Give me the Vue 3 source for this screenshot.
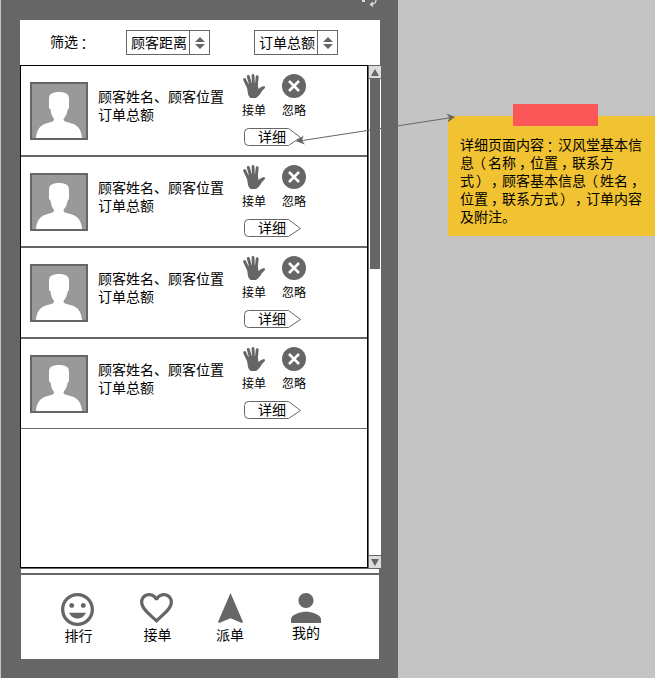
<script setup>
const filters = ['顾客距离', '订单总额']
const rows = [1, 2, 3, 4]
const noteLines = [
  '详细页面内容：汉风堂基本信',
  '息（名称，位置，联系方',
  '式），顾客基本信息（姓名，',
  '位置，联系方式），订单内容',
  '及附注。'
]
const split = (line) => line.split(/([，：（）])/).filter(Boolean)
const marks = { '，': 'comma', '：': 'wide', '（': 'open', '）': 'close' }
const tabs = [
  { name: '排行', cls: 'smile', d: 'M11.99 2C6.47 2 2 6.48 2 12s4.47 10 9.99 10C17.52 22 22 17.52 22 12S17.52 2 11.99 2zM12 20c-4.42 0-8-3.58-8-8s3.58-8 8-8 8 3.58 8 8-3.58 8-8 8zm3.5-9c.83 0 1.5-.67 1.5-1.5S16.33 8 15.5 8 14 8.67 14 9.5s.67 1.5 1.5 1.5zm-7 0c.83 0 1.5-.67 1.5-1.5S9.33 8 8.5 8 7 8.67 7 9.5 7.67 11 8.5 11zm3.5 6.5c2.33 0 4.31-1.46 5.11-3.5H6.89c.8 2.04 2.78 3.5 5.11 3.5z', box: '2 2 20 20', w: 33, ih: 33 },
  { name: '接单', cls: 'heart', d: 'M16.5 3c-1.74 0-3.41.81-4.5 2.09C10.91 3.81 9.24 3 7.5 3 4.42 3 2 5.42 2 8.5c0 3.78 3.4 6.86 8.55 11.54L12 21.35l1.45-1.32C18.6 15.36 22 12.28 22 8.5 22 5.42 19.58 3 16.5 3zm-4.4 15.55l-.1.1-.1-.1C7.14 14.24 4 11.39 4 8.5 4 6.5 5.5 5 7.5 5c1.54 0 3.04.99 3.57 2.36h1.87C13.46 5.99 14.96 5 16.5 5c2 0 3.5 1.5 3.5 3.5 0 2.89-3.14 5.74-7.9 10.05z', box: '2 3 20 18.35', w: 33, ih: 30 },
  { name: '派单', cls: 'send', d: 'M12 2L4.5 20.29l.71.71L12 18l6.79 3 .71-.71z', box: '4.5 2 15 19', w: 25, ih: 30 },
  { name: '我的', cls: 'mine', d: 'M12 12c2.21 0 4-1.79 4-4s-1.79-4-4-4-4 1.79-4 4 1.79 4 4 4zm0 2c-2.67 0-8 1.34-8 4v2h16v-2c0-2.66-5.33-4-8-4z', box: '4 4 16 16', w: 30, ih: 30 }
]
</script>

<template>
  <main class="board">
    <section class="phone">
      <svg class="refresh" width="20" height="7" viewBox="0 0 20 7">
        <path d="M1 0h3v2H1z" fill="#ddd" />
        <path d="M15 0Q15 4 10 4.500M12 2.200L9.500 4.500l2.500 2" fill="none" stroke="#ddd" stroke-width="1.3" />
      </svg>
      <header class="filters">
        <span class="filter-label">筛选<i class="wide">：</i></span>
        <div v-for="f in filters" :key="f" class="select">
          <span class="select-text">{{ f }}</span>
          <span class="stepper">
            <svg width="10" height="12" viewBox="0 0 10 12"><path d="M0 5L5 0l5 5zM0 7h10l-5 5z" /></svg>
          </span>
        </div>
      </header>

      <div class="content">
        <div class="list">
          <article v-for="r in rows" :key="r" class="row">
            <div class="avatar">
              <svg width="54" height="54" viewBox="0 0 54 54">
                <path d="M4 54C4.500 46 8 41.500 14 39.500C19 38 22.500 37.500 22 35Q18.800 31 18.500 25.500L17 24V18L17 15C17 10 20 8 27 8C34 8 37 10 37 15V24L35.800 25.500Q35 31 31.500 35C31 37.500 35 38 40 39.500C46 41.500 49.500 46 50 54Z" fill="#fff" />
              </svg>
            </div>
            <div class="info"><div>顾客姓名、顾客位置</div><div>订单总额</div></div>
            <div class="ops">
              <div class="icons">
                <div class="op">
                  <svg width="24" height="24" viewBox="0 0 24 24">
                    <path d="M6.200 13L2.600 5.500M9 12L6.300 2.500M11.500 12L11 1.500M14.200 12L15.200 2.800" fill="none" stroke="#666" stroke-width="2.900" stroke-linecap="round" />
                    <path d="M4.500 10L8 9.500L10 9L13 9L15.700 9.500L16.500 15Q19 12.500 22 12Q23.800 13 22.500 14.500Q20 16.500 18.500 19.500Q16.500 22.500 14 24H8.500Q6.500 22.500 6 20Z" fill="#666" />
                  </svg>
                  <span>接单</span>
                </div>
                <div class="op">
                  <svg width="24" height="24" viewBox="0 0 24 24">
                    <circle cx="12" cy="12" r="12" fill="#666" />
                    <path d="M7 7l10 10M17 7L7 17" stroke="#fff" stroke-width="2.600" />
                  </svg>
                  <span>忽略</span>
                </div>
              </div>
              <div class="detail">
                <svg width="58" height="19" viewBox="0 0 58 19"><path d="M4.500 .5H44.500L56.500 9.500L44.500 17.500H4.500Q.5 17.500 .5 13.500V4.500Q.5 .5 4.500 .5Z" fill="#fff" stroke="#666" /></svg>
                <span>详细</span>
              </div>
            </div>
          </article>
        </div>
        <div class="scroll">
          <div class="arrow-btn up"><svg width="8" height="7" viewBox="0 0 8 7"><path d="M0 7L4 0l4 7z" /></svg></div>
          <div class="track"><div class="thumb"></div></div>
          <div class="arrow-btn down"><svg width="8" height="7" viewBox="0 0 8 7"><path d="M0 0h8L4 7z" /></svg></div>
        </div>
      </div>

      <div class="strip"></div>
      <nav class="tabs">
        <div v-for="t in tabs" :key="t.name" class="tab" :class="t.cls">
          <svg :width="t.w" :height="t.ih" :viewBox="t.box" preserveAspectRatio="none"><path :d="t.d" /></svg>
          <span>{{ t.name }}</span>
        </div>
      </nav>
    </section>

    <aside class="note">
      <div class="tape"></div>
      <p v-for="line in noteLines" :key="line" class="line"><template v-for="(part, i) in split(line)" :key="i"><i v-if="marks[part]" :class="marks[part]">{{ part }}</i><template v-else>{{ part }}</template></template></p>
    </aside>

    <svg class="link" width="655" height="678" viewBox="0 0 655 678">
      <path d="M299 141L452 117.500" stroke="#666" fill="none" />
      <path d="M296 141.300L303.500 135.500L302 140.500L305 144.500ZM455 117L446.500 113.500L449.500 117.700L447.500 122.500Z" fill="#666" />
    </svg>
  </main>
</template>

<style>
body { margin: 0; background: #c4c4c4; }
</style>

<style scoped>
* { box-sizing: border-box; }
svg { display: block; flex: none; }
.board {
  position: relative; display: flex; align-items: flex-start; width: 655px; height: 678px;
  overflow: hidden; padding-left: 1px; background: #c4c4c4; color: #000;
  font: 14px/18px "Noto Sans CJK SC", sans-serif; white-space: nowrap; text-spacing-trim: space-all;
}
i { font-style: normal; }
.wide, .comma, .open, .close { display: inline-block; width: 14px; height: 16px; }
.wide { font-family: "Noto Sans CJK JP", sans-serif; transform: translate(-1px, 2px); }
.comma { text-indent: 3px; }
.open { text-indent: -2px; }
.close { text-indent: 2px; }
.phone { position: relative; flex: none; width: 397px; height: 678px; padding: 20px 0 0 19px; background: #666; }
.refresh { position: absolute; left: 360px; top: 0; }
.filters { display: flex; align-items: flex-start; width: 360px; height: 45px; padding: 10px 0 0 30px; background: #fff; }
.filter-label { width: 76px; padding-top: 2px; flex: none; }
.select { display: flex; flex: none; width: 84px; height: 25px; margin-right: 44px; border: 1px solid #666; }
.select-text { width: 63px; flex: none; padding: 2px 0 0 4px; border-right: 1px solid #666; }
.stepper { display: flex; align-items: center; justify-content: center; width: 19px; }
.stepper svg, .arrow-btn svg, .tab svg { fill: #666; }
.content { display: flex; height: 503px; }
.list { width: 348px; height: 503px; border: 1px solid #000; background: #fff; }
.row { display: flex; align-items: flex-start; height: 91px; border-bottom: 2px solid #666; padding-left: 9px; }
.row:last-child { height: 90px; border-bottom-width: 1px; }
.avatar { width: 58px; height: 58px; margin-top: 16px; border: 2px solid #666; background: #999; }
.info { width: 136px; margin: 21px 0 0 10px; }
.ops { display: flex; flex-direction: column; margin-left: 8px; padding-top: 8px; }
.icons { display: flex; gap: 16px; }
.op { display: flex; flex-direction: column; align-items: center; width: 24px; font-size: 12px; }
.op span { line-height: 18px; margin-top: 3px; }
.detail { display: grid; width: 58px; height: 19px; margin: 9px 0 0 2px; }
.detail svg, .detail span { grid-area: 1 / 1; }
.detail span { padding-left: 14px; line-height: 17px; }
.scroll { display: flex; flex-direction: column; width: 12px; margin-left: 1px; }
.arrow-btn { display: flex; align-items: center; justify-content: center; height: 13px; background: #ddd; border: 0 solid #666; }
.up { height: 14px; border-width: 1px 0; }
.down { border-top-width: 1px; }
.track { flex: 1; padding-left: 1px; background: #fff; }
.thumb { width: 10px; height: 190px; background: #666; }
.strip { width: 358px; height: 4px; margin: 1px 0 0 1px; background: #fff; }
.tabs { display: flex; align-items: flex-start; width: 358px; height: 84px; margin: 2px 0 0 1px; padding-top: 18px; background: #fff; }
.tab { display: flex; flex-direction: column; align-items: center; }
.smile { margin-left: 40px; }
.heart { margin-left: 46px; }
.send { margin-left: 43px; }
.mine { margin-left: 47px; }
.smile span, .heart span { padding-left: 2px; }
.heart span, .send span { margin-top: 2px; }
.note { position: relative; flex: none; width: 208px; height: 120px; margin: 116px 0 0 50px; padding: 19px 0 0 12px; background: #f1c232; }
.tape { position: absolute; left: 65px; top: -12px; width: 85px; height: 22px; background: #fa5858; }
.line { margin: 0; height: 18px; }
.link { position: absolute; left: 0; top: 0; }
</style>
